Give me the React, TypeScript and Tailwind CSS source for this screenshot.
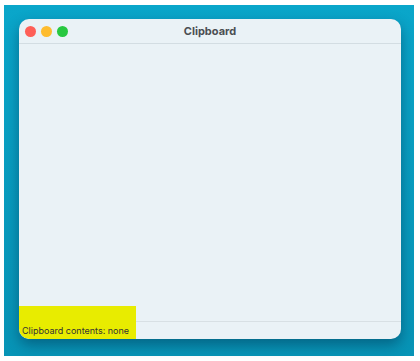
import React from 'react';

export default function App() {
  return (
    <div className="w-[420px] h-[361px] bg-white pt-[5px] pl-[4px]" style={{ fontFamily: 'Inter, "Liberation Sans", sans-serif' }}>
      <div className="w-[410px] h-[351px] bg-gradient-to-b from-[#0aa6ca] to-[#0794b6] pt-[14px] pl-[15px]">
        <div className="relative w-[382px] h-[320px] rounded-[10px] bg-[#eaf2f6] flex flex-col shadow-[0_6px_14px_rgba(0,40,70,0.45)] overflow-hidden">
          <div className="h-[25px] flex items-center border-b border-[#d3dde2] relative">
            <div className="flex items-center gap-[5px] pl-[6px]">
              <span className="w-[11px] h-[11px] rounded-full bg-[#fe5f57]" />
              <span className="w-[11px] h-[11px] rounded-full bg-[#febc2e]" />
              <span className="w-[11px] h-[11px] rounded-full bg-[#28c840]" />
            </div>
            <div className="absolute inset-0 flex items-center justify-center text-[11px] font-bold text-[#4b4e52]">
              Clipboard
            </div>
          </div>
          <div className="flex-1" />
          <div className="h-[18px] border-t border-[#d8e0e4] flex items-center pl-[3px] text-[9px] text-[#333]">
            <span className="relative z-10">Clipboard contents: none</span>
          </div>
          <div className="absolute left-0 bottom-0 w-[117px] h-[33px] bg-[#e8ec00] rounded-bl-[10px]" />
        </div>
      </div>
    </div>
  );
}
